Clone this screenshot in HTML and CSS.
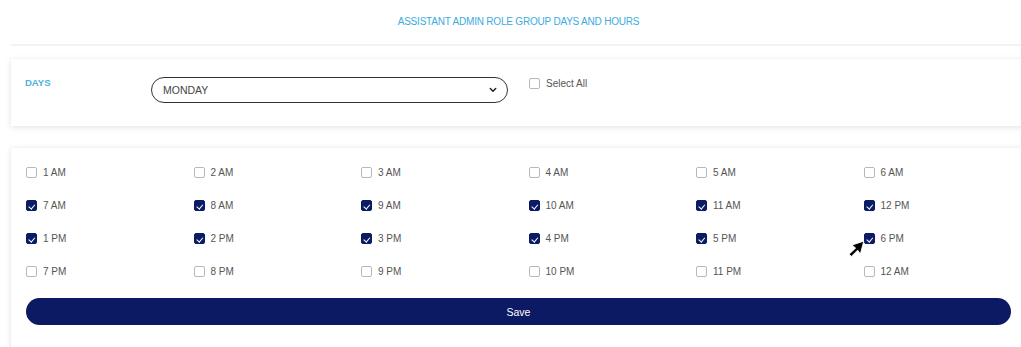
FILE: index.html
```html
<!DOCTYPE html>
<html lang="en">

<head>
    <meta charset="utf-8">
    <meta name="viewport" content="width=device-width, initial-scale=1.0">
    <title>Assistant admin role group days and hours</title>
    <link rel="stylesheet" href="styles.css">
</head>

<body>
    <h1 class="titel">ASSISTANT ADMIN ROLE GROUP DAYS AND HOURS</h1>
    <div class="skille"></div>

    <section class="panel dage">
        <label class="dage-label">DAYS</label>
        <div class="vaelg">
            <span>MONDAY</span>
            <svg width="8" height="6" viewBox="0 0 8 6">
                <path d="M1.3 1.5 L4 4.2 L6.7 1.5" fill="none" stroke="#222" stroke-width="1.5" stroke-linecap="round" stroke-linejoin="round"/>
            </svg>
        </div>
        <div class="boks-linje">
            <span class="boks"></span>
            <span>Select All</span>
        </div>
    </section>

    <section class="panel timer">
        <div class="timer-grid">
            <div class="boks-linje"><span class="boks"></span><span>1 AM</span></div>
            <div class="boks-linje"><span class="boks"></span><span>2 AM</span></div>
            <div class="boks-linje"><span class="boks"></span><span>3 AM</span></div>
            <div class="boks-linje"><span class="boks"></span><span>4 AM</span></div>
            <div class="boks-linje"><span class="boks"></span><span>5 AM</span></div>
            <div class="boks-linje"><span class="boks"></span><span>6 AM</span></div>

            <div class="boks-linje"><span class="boks valgt"></span><span>7 AM</span></div>
            <div class="boks-linje"><span class="boks valgt"></span><span>8 AM</span></div>
            <div class="boks-linje"><span class="boks valgt"></span><span>9 AM</span></div>
            <div class="boks-linje"><span class="boks valgt"></span><span>10 AM</span></div>
            <div class="boks-linje"><span class="boks valgt"></span><span>11 AM</span></div>
            <div class="boks-linje"><span class="boks valgt"></span><span>12 PM</span></div>

            <div class="boks-linje"><span class="boks valgt"></span><span>1 PM</span></div>
            <div class="boks-linje"><span class="boks valgt"></span><span>2 PM</span></div>
            <div class="boks-linje"><span class="boks valgt"></span><span>3 PM</span></div>
            <div class="boks-linje"><span class="boks valgt"></span><span>4 PM</span></div>
            <div class="boks-linje"><span class="boks valgt"></span><span>5 PM</span></div>
            <div class="boks-linje markoer-holder">
                <span class="boks valgt"></span><span>6 PM</span>
                <!-- musemarkør over boksen -->
                <svg class="markoer" width="18" height="18" viewBox="0 0 16 16">
                    <polygon points="14,1 3.5,4.5 6.8,7.2 1,12.6 3,14.6 8.6,9 11,12.5" fill="#000" stroke="#fff" stroke-width="0.8" stroke-linejoin="round"/>
                </svg>
            </div>

            <div class="boks-linje"><span class="boks"></span><span>7 PM</span></div>
            <div class="boks-linje"><span class="boks"></span><span>8 PM</span></div>
            <div class="boks-linje"><span class="boks"></span><span>9 PM</span></div>
            <div class="boks-linje"><span class="boks"></span><span>10 PM</span></div>
            <div class="boks-linje"><span class="boks"></span><span>11 PM</span></div>
            <div class="boks-linje"><span class="boks"></span><span>12 AM</span></div>
        </div>

        <button class="gem">Save</button>
    </section>
</body>

</html>
```

FILE: styles.css
```css
* {
    box-sizing: border-box;
}

body {
    margin: 0;
    font-family: "Liberation Sans", Arial, sans-serif;
    background-color: #fff;
    color: #555;
    overflow: hidden;
}

.titel {
    margin: 0;
    padding-top: 16px;
    padding-left: 16px;
    height: 38px;
    font-size: 10px;
    font-weight: normal;
    text-align: center;
    color: #3aace0;
    letter-spacing: -0.2px;
}

.skille {
    margin-left: 11px;
    margin-top: 6px;
    height: 2px;
    background-color: #f2f2f2;
}

.panel {
    margin-left: 11px;
    margin-right: -5px;
    background-color: #fff;
    box-shadow: 0 1px 6px rgba(0, 0, 0, 0.12);
}

.dage {
    margin-top: 13px;
    height: 67px;
    padding: 18px 14px 0;
    display: grid;
    grid-template-columns: 105px 357px auto;
    column-gap: 21px;
    align-items: start;
}

.dage-label {
    font-size: 9.5px;
    font-weight: bold;
    color: #4ab2e0;
}

.vaelg {
    height: 26px;
    border: 1px solid #333;
    border-radius: 13px;
    padding: 0 10px 0 11px;
    display: flex;
    align-items: center;
    justify-content: space-between;
    font-size: 10.5px;
    color: #444;
}

.timer {
    margin-top: 22px;
    padding: 19px 15px 30px;
}

.timer-grid {
    display: grid;
    grid-template-columns: repeat(6, 167.5px);
    grid-auto-rows: 33px;
}

.boks-linje {
    display: flex;
    align-items: flex-start;
    gap: 6px;
    font-size: 10px;
    color: #555;
    height: 11px;
    line-height: 11px;
}

.dage .boks-linje {
    padding-top: 1px;
}

.boks {
    flex: none;
    width: 11px;
    height: 11px;
    border: 1px solid #b4b9be;
    border-radius: 2px;
    background-color: #fff;
    position: relative;
}

.boks.valgt {
    background-color: #0b1c64;
    border-color: #0b1c64;
}

.boks.valgt::after {
    content: "";
    position: absolute;
    left: 3px;
    top: 1.5px;
    width: 2.5px;
    height: 4.5px;
    border: solid #fff;
    border-width: 0 1.5px 1.5px 0;
    transform: rotate(40deg);
}

.markoer-holder {
    position: relative;
}

.markoer {
    position: absolute;
    left: -16px;
    top: 7px;
}

.gem {
    display: block;
    width: 985px;
    height: 27px;
    margin-top: -1px;
    border: none;
    border-radius: 14px;
    background-color: #0b1a62;
    color: #fff;
    font-family: "Liberation Sans", Arial, sans-serif;
    font-size: 10.5px;
}
```
